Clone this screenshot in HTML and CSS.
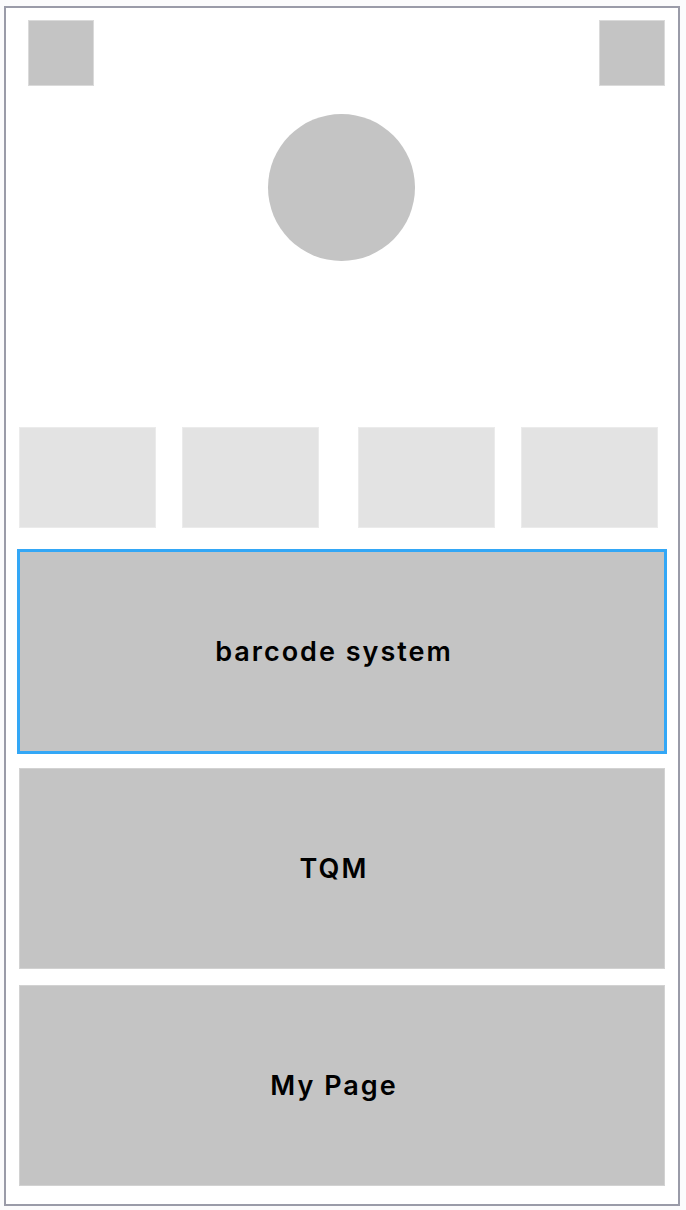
FILE: index.html
```html
<!DOCTYPE html>
<html lang="en">
  <head>
    <meta charset="UTF-8" />
    <meta name="viewport" content="width=device-width, initial-scale=1.0" />
    <title>Home</title>
    <link rel="stylesheet" href="styles.css">
  </head>
  <body>
    <div class="frame">
      <div class="top-bar">
        <div class="square"></div>
        <div class="square"></div>
      </div>

      <div class="avatar"></div>

      <div class="tiles">
        <div class="tile-group">
          <div class="tile"></div>
          <div class="tile"></div>
        </div>
        <div class="tile-group">
          <div class="tile"></div>
          <div class="tile"></div>
        </div>
      </div>

      <div class="menu">
        <div class="menu-item active">barcode system</div>
        <div class="menu-item">TQM</div>
        <div class="menu-item">My Page</div>
      </div>
    </div>
  </body>
</html>
```

FILE: styles.css
```css
body {
  margin: 0;
  background: #fbfbfc;
  font-family: "Inter", "Noto Sans", sans-serif;
}
.frame {
  margin: 6px 0 0 4px;
  width: 676px;
  height: 1200px;
  box-sizing: border-box;
  border: 2px solid #9a9ba8;
  background: #ffffff;
}
.top-bar {
  display: flex;
  justify-content: space-between;
  padding: 12px 13px 0 22px;
}
.square {
  width: 66px;
  height: 66px;
  box-sizing: border-box;
  background: #c4c4c4;
  border: 1px solid #dadada;
}
.avatar {
  width: 147px;
  height: 147px;
  margin: 28px 0 0 262px;
  border-radius: 50%;
  background: #c4c4c4;
}
.tiles {
  display: flex;
  gap: 39px;
  margin: 166px 0 0 13px;
}
.tile-group {
  display: flex;
  gap: 26px;
}
.tile {
  width: 137px;
  height: 101px;
  box-sizing: border-box;
  background: #e3e3e3;
  border: 1px solid #ebebeb;
}
.menu {
  display: flex;
  flex-direction: column;
  gap: 16px;
  margin: 23px 0 0 13px;
}
.menu-item {
  width: 646px;
  height: 201px;
  box-sizing: border-box;
  padding-right: 16px;
  display: flex;
  justify-content: center;
  align-items: center;
  background: #c4c4c4;
  border: 1px solid #d2d2d2;
  color: #000;
  font-size: 27px;
  font-weight: 600;
  letter-spacing: 2px;
}
.menu-item.active {
  border-color: #c4c4c4;
  outline: 3px solid #33a7f6;
  outline-offset: -1px;
}
```
